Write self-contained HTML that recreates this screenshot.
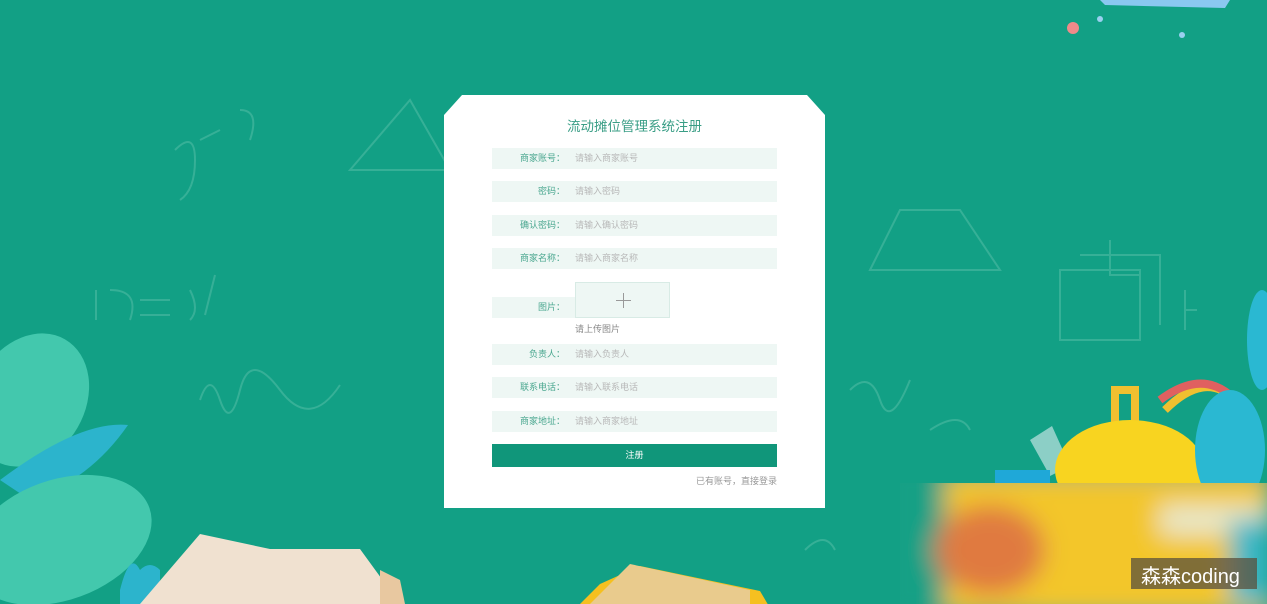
<!DOCTYPE html>
<html><head><meta charset="utf-8">
<style>
*{margin:0;padding:0;box-sizing:border-box}
html,body{width:1267px;height:604px;overflow:hidden}
body{background:#12a085;position:relative;font-family:"Liberation Sans","Noto Sans CJK SC",sans-serif}
.deco{position:absolute;left:0;top:0}
.card{position:absolute;left:444px;top:95px;width:381px;height:413px;background:#fff;
clip-path:polygon(18px 0,363px 0,381px 20px,381px 413px,0 413px,0 20px)}
.title{position:absolute;top:20px;width:100%;text-align:center;color:#3a9e86;font-size:13.5px}
.row{position:absolute;left:48px;width:285px;height:21px;background:#eef7f4;font-size:9px;line-height:21px}
.row .l{position:absolute;left:0;width:73px;text-align:right;color:#4aa78f}
.row .p{position:absolute;left:83px;color:#b8b8b8}
.up{position:absolute;left:131px;top:187px;width:95px;height:36px;background:#eef7f4;border:1px solid #d8ebe5}
.up:before{content:"";position:absolute;left:40px;top:17px;width:15px;height:1px;background:#999}
.up:after{content:"";position:absolute;left:47px;top:10px;width:1px;height:15px;background:#999}
.hint{position:absolute;left:131px;top:227px;font-size:9px;color:#888}
.btn{position:absolute;left:48px;top:349px;width:285px;height:23px;background:#10967a;color:#fff;font-size:9px;text-align:center;line-height:23px}
.log{position:absolute;right:48px;top:379px;font-size:9px;color:#999}
.wm{position:absolute;left:1131px;top:558px;width:126px;height:31px;background:rgba(90,80,60,.75);color:#fff;font-size:20px;line-height:38px;padding-left:10px;overflow:hidden}
</style></head><body>
<svg class="deco" width="1267" height="604" viewBox="0 0 1267 604">
<defs><filter id="b" x="-20%" y="-20%" width="140%" height="140%"><feGaussianBlur stdDeviation="12"/></filter>
<clipPath id="c"><rect x="900" y="483" width="367" height="121"/></clipPath></defs>
<g fill="none" stroke="#4fbaa4" stroke-width="2" opacity=".6">
<path d="M175 150q20-20 20 10t-15 40M200 140l20-10M240 110q20 0 10 30M350 170l60-70 40 70z M96 290l0 30M110 290q30 0 20 30M140 300h30M140 315h30M190 290q10 20 0 30M215 275l-10 40"/>
<path d="M200 400q10-30 20 0t20-10 40 0 60-5"/>
<path d="M870 270l30-60 60 0 40 60z M1060 270h80v70h-80z M1080 255h80v70M1110 240v35h30M1185 290v40M1185 310h12"/>
<path d="M850 390q20-20 30 10t30-20M930 430q30-20 40 0M805 550q20-20 30 0"/>
</g>
<g opacity=".9">
<ellipse cx="30" cy="400" rx="55" ry="70" fill="#49cdb2" transform="rotate(30 30 400)"/>
<path d="M0 480 Q80 420 128 425 Q90 480 30 500 Z" fill="#2fb7d4"/>
<ellipse cx="60" cy="540" rx="95" ry="60" fill="#49cdb2" transform="rotate(-20 60 540)"/>
<path d="M120 590q10-40 20-20 10-10 20 0v34h-40z" fill="#2fb7d4"/>
</g>
<g>
<path d="M140 604l60-70 70 15 90 0 40 55z" fill="#f0e1d0"/>
<path d="M380 570l20 10 5 24h-25z" fill="#e8c8a0"/>
<path d="M580 604l20-20 40-18 120 25 10 17z" fill="#f5c020"/>
<path d="M590 604l40-40 120 26 0 14z" fill="#e9cb8d"/>
</g>
<g>
<path d="M1030 440l22-14 18 40-20 10z" fill="#8ccfc6"/>
<rect x="995" y="470" width="55" height="20" fill="#1fa8d8"/>
<path d="M1115 390h20v40h-20z M1235 400q-30-30-70 10" fill="none" stroke="#f0c030" stroke-width="8"/>
<path d="M1160 400q40-30 70-5" fill="none" stroke="#e06060" stroke-width="8"/>
<ellipse cx="1130" cy="470" rx="75" ry="50" fill="#f8d420"/>
<ellipse cx="1230" cy="450" rx="35" ry="60" fill="#2ab8d2"/>
<ellipse cx="1262" cy="340" rx="15" ry="50" fill="#2ab8d2"/>
</g>
<g clip-path="url(#c)"><g filter="url(#b)">
<rect x="880" y="460" width="400" height="160" fill="#12a085"/>
<rect x="945" y="475" width="322" height="140" fill="#f3c62a"/>
<ellipse cx="990" cy="550" rx="55" ry="45" fill="#e07a40"/>
<rect x="1160" y="505" width="107" height="30" fill="#e8e8c8"/>
<rect x="1230" y="520" width="37" height="84" fill="#3ab8c8"/>
</g></g>
<circle cx="1073" cy="28" r="6" fill="#f08a8a"/><circle cx="1100" cy="19" r="3" fill="#9ad0f0"/><circle cx="1182" cy="35" r="3" fill="#9ad0f0"/>
<path d="M1100 0l130 0-5 8-120-3z" fill="#8ac8f0"/>
</svg>
<div class="card">
<div class="title">流动摊位管理系统注册</div>
<div class="row" style="top:53px"><span class="l">商家账号：</span><span class="p">请输入商家账号</span></div>
<div class="row" style="top:86px"><span class="l">密码：</span><span class="p">请输入密码</span></div>
<div class="row" style="top:120px"><span class="l">确认密码：</span><span class="p">请输入确认密码</span></div>
<div class="row" style="top:153px"><span class="l">商家名称：</span><span class="p">请输入商家名称</span></div>
<div class="row" style="top:202px;width:83px"><span class="l">图片：</span></div>
<div class="up"></div>
<div class="hint">请上传图片</div>
<div class="row" style="top:249px"><span class="l">负责人：</span><span class="p">请输入负责人</span></div>
<div class="row" style="top:282px"><span class="l">联系电话：</span><span class="p">请输入联系电话</span></div>
<div class="row" style="top:316px"><span class="l">商家地址：</span><span class="p">请输入商家地址</span></div>
<div class="btn">注册</div>
<div class="log">已有账号，直接登录</div>
</div>
<div class="wm">森森coding</div>
</body></html>
